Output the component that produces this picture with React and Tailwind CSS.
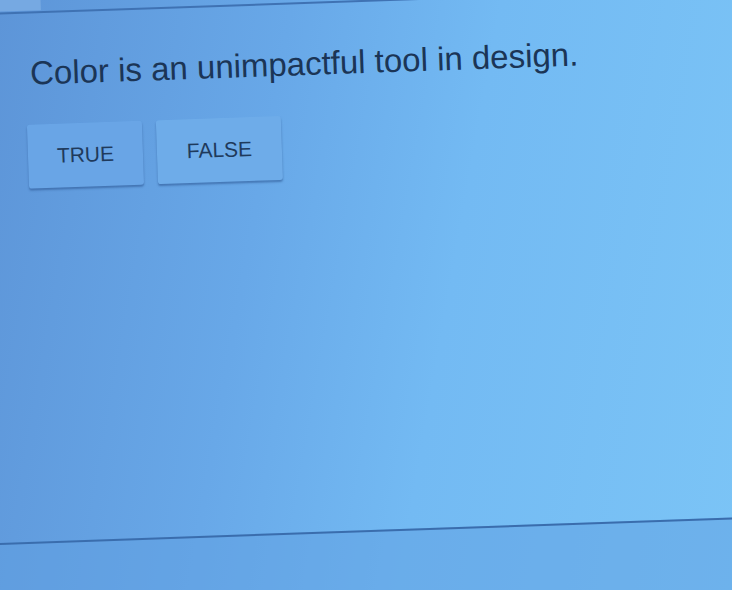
export default function App() {
  const sans = { fontFamily: '"Liberation Sans", Arial, sans-serif' };
  return (
    <div
      className="relative h-[590px] w-[732px] overflow-hidden bg-[linear-gradient(100deg,#5d95d8_0%,#68a8e8_35%,#73baf3_60%,#7bc4f6_100%)]"
      style={sans}
    >
      <div className="-ml-[24px] -mt-[90px] flex w-[780px] rotate-[-2deg] flex-col">
        {/* header strip */}
        <div className="flex h-[92px] items-end border-b-2 border-[#3f72b3]">
          <div className="mb-[1px] ml-[22px] h-[16px] w-[52px] rounded-t-sm bg-[#76a9e2]" />
        </div>

        {/* question card */}
        <div className="flex h-[528px] flex-col pl-[61px] pt-[43px]">
          <p className="text-[33px] leading-none text-[#1b3556]">
            Color is an unimpactful tool in design.
          </p>
          <div className="-ml-[5px] mt-[35px] flex gap-[14px]">
            <button className="flex h-[64px] w-[115px] items-center justify-center rounded-[3px] bg-[#69a5e6] text-[21px] text-[#1f3a5c] shadow-[0_2px_2px_rgba(35,75,135,0.5)]">
              TRUE
            </button>
            <button className="flex h-[64px] w-[125px] items-center justify-center rounded-[3px] bg-[#6eace9] text-[21px] text-[#1f3a5c] shadow-[0_2px_2px_rgba(35,75,135,0.5)]">
              FALSE
            </button>
          </div>
        </div>

        {/* footer */}
        <div className="h-[90px] border-t-2 border-[#3a6dad] bg-[#5f9fe2]/50" />
      </div>
    </div>
  );
}
